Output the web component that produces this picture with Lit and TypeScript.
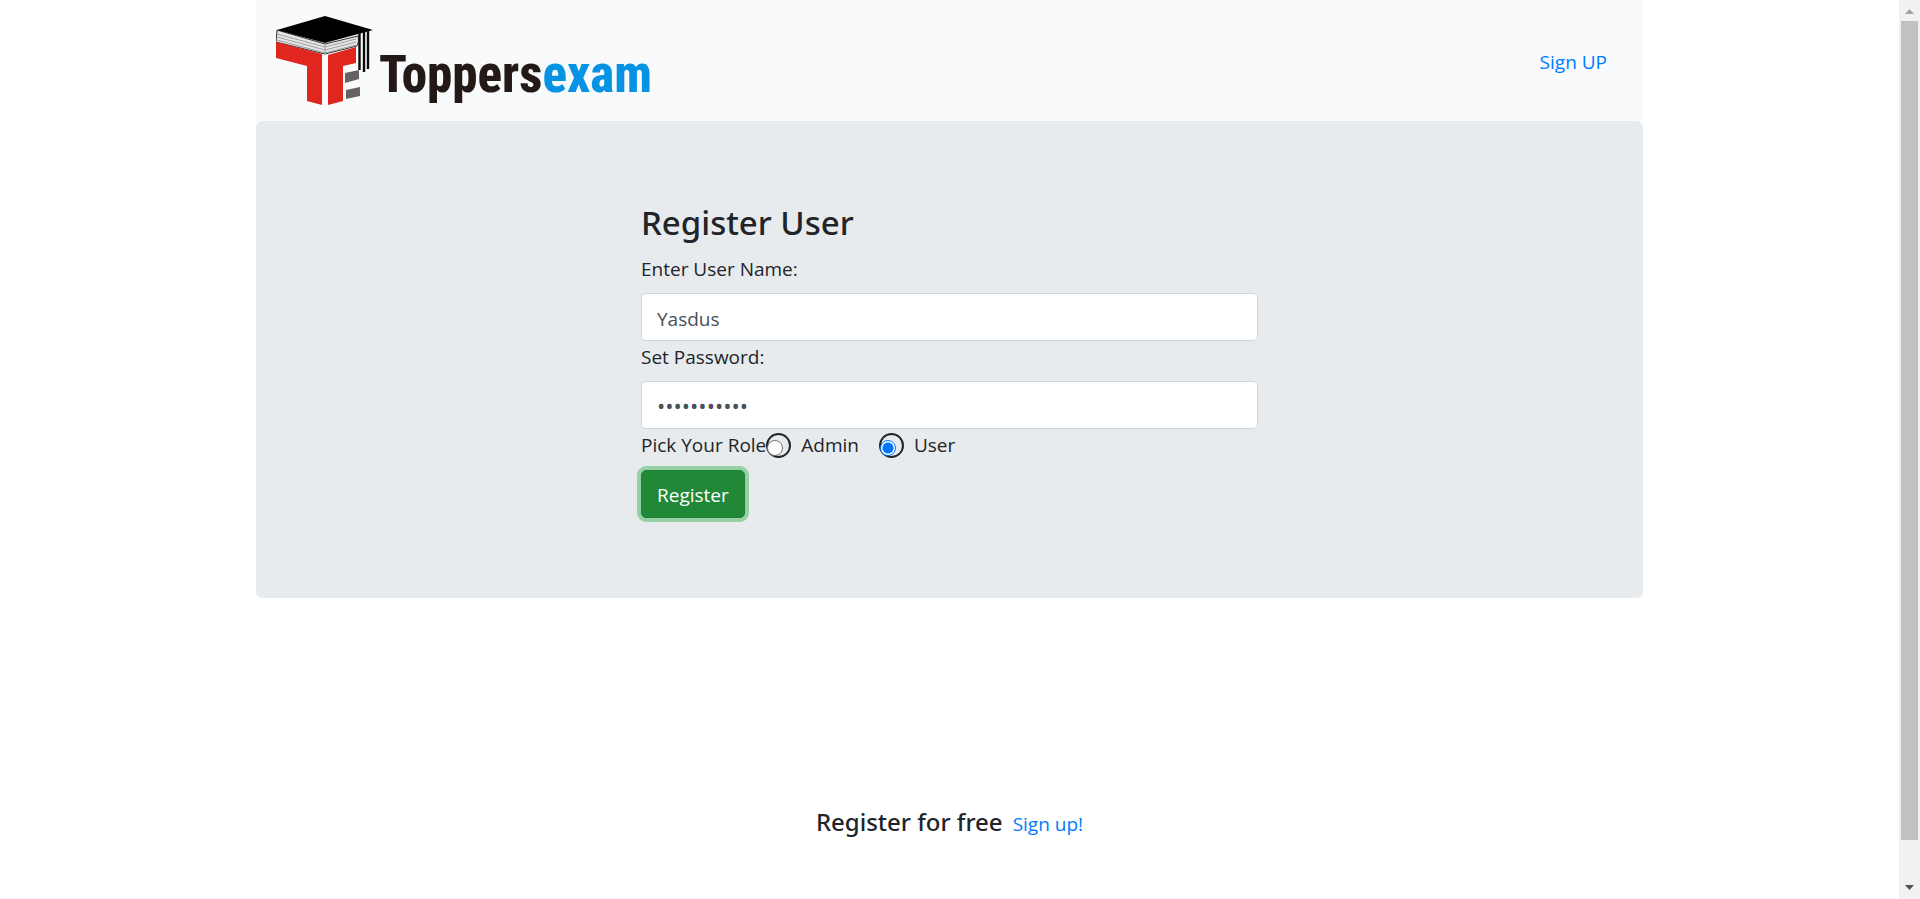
import { LitElement, html, css, svg } from "lit";
import { customElement, state } from "lit/decorators.js";

@customElement("brand-logo")
class BrandLogo extends LitElement {
  static styles = css`
    :host {
      display: block;
    }
    svg {
      display: block;
    }
    .word {
      font-family: "Roboto Condensed", "Liberation Sans Narrow", "Roboto", sans-serif;
      font-size: 51px;
      font-weight: 800;
      fill: #231a17;
    }
    .accent {
      fill: #0693e3;
    }
  `;

  render() {
    const pages = [0, 1, 2].map(
      (i) => svg`<path d="M1 ${18 + i * 3} L49 ${31 + i * 3} L80 ${23 + i * 3}" fill="none" stroke="#a0a0a0" stroke-width="1"/>`
    );
    return html`
      <svg width="384" height="92" viewBox="0 0 384 92" role="img" aria-label="Toppersexam">
        <path d="M1 14 L49 28 L82 20 Q84 24 81 30 L49 38 L0 26 Z" fill="#e6e6e6" stroke="#333" stroke-width="1" />
        ${pages}
        <path d="M49 29 V38" stroke="#999" stroke-width="1" />
        <path d="M49 0 L97 14 L49 27 L1 14 Z" fill="#000" />
        <path d="M0 26 L46 38 V89 L31 85 V50 L0 42 Z" fill="#e1251f" />
        <path d="M52 39 L80 31 V47 L67 50 V85 L52 89 Z" fill="#e1251f" />
        <path d="M83.5 17 V54 M88 16 V56 M92 15 V53" stroke="#0a0a0a" stroke-width="2.4" />
        <path d="M69 57 L83 54 V63 L69 67 Z M70 74 L84 71 V80 L70 83 Z" fill="#666262" />
        <text class="word" x="103" y="76">Toppers<tspan class="accent">exam</tspan></text>
      </svg>
    `;
  }
}

@customElement("page-scrollbar")
class PageScrollbar extends LitElement {
  static styles = css`
    :host {
      display: flex;
      flex-direction: column;
      background: #f1f1f1;
      padding: 0 2px;
    }
    svg {
      display: block;
      width: 17px;
      height: 21px;
      flex: none;
    }
    .track {
      flex: 1;
      display: grid;
      grid-template-rows: 819fr 38fr;
    }
    .thumb {
      background: #c1c1c1;
    }
  `;

  render() {
    return html`
      <svg viewBox="0 0 17 21" aria-hidden="true"><path d="M4 14 L8.5 9 L13 14 Z" fill="#a3a3a3" /></svg>
      <div class="track"><div class="thumb"></div></div>
      <svg viewBox="0 0 17 21" aria-hidden="true"><path d="M4 7 L8.5 12 L13 7 Z" fill="#505050" /></svg>
    `;
  }
}

@customElement("app-root")
class AppRoot extends LitElement {
  static styles = css`
    :host {
      display: grid;
      grid-template-columns: 1fr 21px;
      height: 100vh;
      font-family: "Segoe UI", "Open Sans", "Noto Sans", sans-serif;
      font-size: 19px;
      line-height: 30px;
      color: #212529;
      background: #fff;
    }
    * {
      box-sizing: border-box;
    }
    .page {
      overflow: hidden;
    }
    .container {
      width: 100%;
      max-width: 1387px;
      margin: 0 auto;
    }
    a {
      color: #007bff;
      text-decoration: none;
    }
    header {
      display: flex;
      align-items: center;
      justify-content: space-between;
      background: #f8fafc;
      padding: 16px 36px 13px 20px;
    }
    main {
      background: #e8ebee;
      border-radius: 6px;
      padding: 81px 20px 80px;
    }
    form {
      display: flex;
      flex-direction: column;
      align-items: flex-start;
      width: 617px;
      max-width: 100%;
      margin: 0 auto;
    }
    h3,
    h5 {
      margin: 0;
      font-family: "Segoe UI", "Noto Sans", "Open Sans", sans-serif;
      font-weight: 500;
    }
    h3 {
      margin-bottom: 10px;
      font-size: 33px;
      line-height: 42px;
    }
    h5 {
      font-size: 24px;
      line-height: 30px;
    }
    .label {
      margin-bottom: 9px;
    }
    .field {
      width: 100%;
      height: 48px;
      padding: 10px 15px 6px;
      margin-bottom: 1px;
      border: 1px solid #ced4da;
      border-radius: 5px;
      background: #fff;
      color: #495057;
      font: inherit;
      outline: none;
    }
    .field[type="password"] {
      padding: 8px 15px;
      font-size: 22px;
    }
    fieldset {
      display: flex;
      align-items: center;
      width: 100%;
      height: 40px;
      margin: 0;
      padding: 0 0 12px;
      border: 0;
    }
    .choice {
      display: flex;
      align-items: center;
      margin-right: 20px;
    }
    .ring {
      display: flex;
      align-items: flex-end;
      width: 25px;
      height: 25px;
      margin-right: 10px;
      border: 2px solid #212529;
      border-radius: 50%;
    }
    .ring input {
      appearance: none;
      flex: none;
      width: 16px;
      height: 16px;
      margin: 0 0 0 -1px;
      border: 1px solid #767676;
      border-radius: 50%;
      background: #fff;
    }
    .ring input:checked {
      border-color: #0075ff;
      background: radial-gradient(circle, #0075ff 5px, #fff 6px);
    }
    button {
      height: 48px;
      padding: 9px 15px 7px;
      border: 1px solid #1e7e34;
      border-radius: 5px;
      background: #218838;
      box-shadow: 0 0 0 4px #98d0a6;
      color: #fff;
      font: inherit;
    }
    footer {
      display: flex;
      align-items: baseline;
      justify-content: center;
      gap: 10px;
      padding-top: 209px;
    }
  `;

  @state() private role = "User";

  private choice(name: string) {
    return html`
      <label class="choice">
        <span class="ring">
          <input
            type="radio"
            name="role"
            .value=${name}
            .checked=${this.role === name}
            @change=${() => (this.role = name)}
          />
        </span>
        ${name}
      </label>
    `;
  }

  render() {
    return html`
      <div class="page">
        <div class="container">
          <header>
            <brand-logo></brand-logo>
            <a href="#signup">Sign UP</a>
          </header>
          <main>
            <form @submit=${(e: Event) => e.preventDefault()}>
              <h3>Register User</h3>
              <label class="label" for="username">Enter User Name:</label>
              <input class="field" id="username" type="text" value="Yasdus" />
              <label class="label" for="password">Set Password:</label>
              <input class="field" id="password" type="password" value="yasdus12345" />
              <fieldset aria-labelledby="role-label">
                <span id="role-label">Pick Your Role</span>
                ${this.choice("Admin")} ${this.choice("User")}
              </fieldset>
              <button type="submit">Register</button>
            </form>
          </main>
          <footer>
            <h5>Register for free</h5>
            <a href="#signup">Sign up!</a>
          </footer>
        </div>
      </div>
      <page-scrollbar></page-scrollbar>
    `;
  }
}
